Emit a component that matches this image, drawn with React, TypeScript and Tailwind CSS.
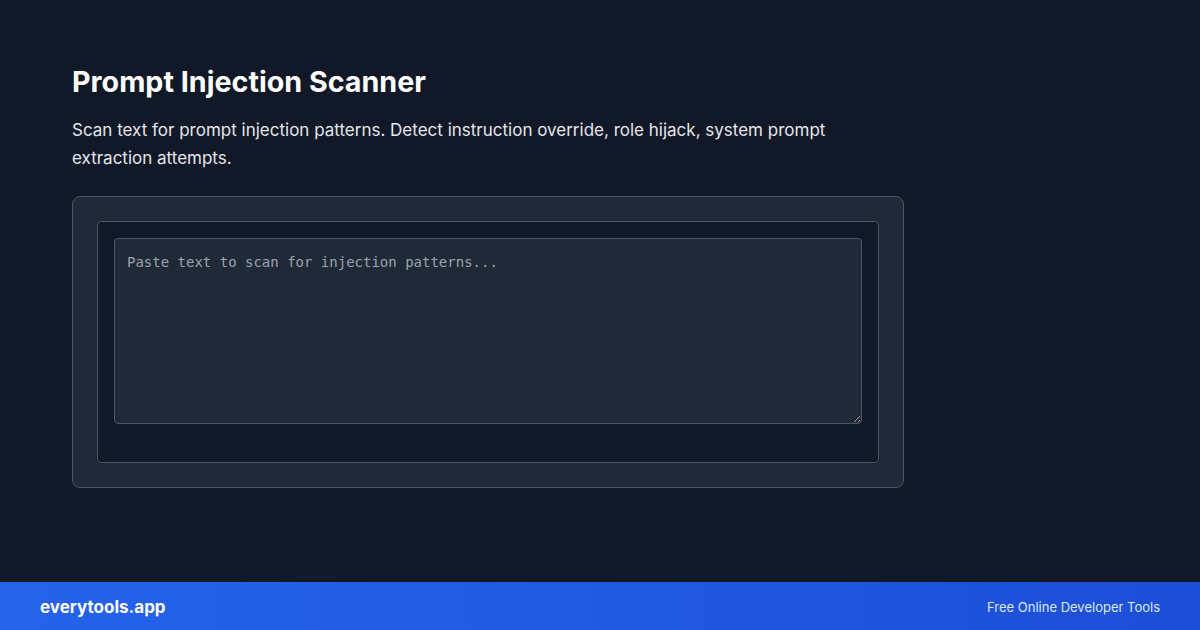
import React from "react";

export default function App() {
  return (
    <div
      className="w-[1200px] h-[630px] bg-[#111827] flex flex-col overflow-hidden"
      style={{ fontFamily: "Inter, 'Noto Sans', sans-serif" }}
    >
      <main className="flex-1 pl-[72px] pt-16">
        <h1 className="text-[28.7px] leading-9 font-bold text-white">
          Prompt Injection Scanner
        </h1>
        <p className="mt-4 text-[17px] leading-7 text-[#e5e7eb] max-w-[768px]">
          Scan text for prompt injection patterns. Detect instruction override, role hijack, system prompt extraction attempts.
        </p>
        <div className="mt-6 w-[832px] h-[292px] rounded-lg border border-[#4b5563] bg-[#1f2937] p-6">
          <div className="rounded border border-[#4b5563] bg-[#111827] p-4 h-[242px]">
            <textarea
              className="block w-full h-[186px] rounded border border-[#4b5563] bg-[#1f2937] px-3 pt-[13px] pb-3 text-sm text-gray-200 placeholder:text-[#9ca3af] outline-none"
              style={{ fontFamily: "'DejaVu Sans Mono', 'Liberation Mono', monospace" }}
              placeholder="Paste text to scan for injection patterns..."
            />
          </div>
        </div>
      </main>
      <footer className="h-12 flex items-center justify-between px-10 pt-[3px] bg-gradient-to-r from-[#2563eb] to-[#1d4ed8]">
        <span className="text-white font-bold text-[17px]">everytools.app</span>
        <span className="text-[#dbeafe] text-[13px]">Free Online Developer Tools</span>
      </footer>
    </div>
  );
}
